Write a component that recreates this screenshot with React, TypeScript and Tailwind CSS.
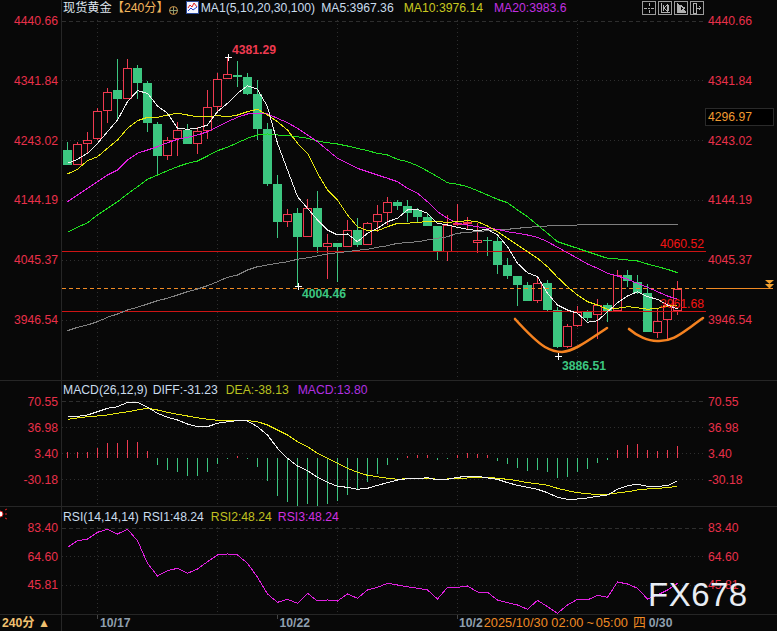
// 现货黄金 240分 K线图
type Candle = [kind: 'r' | 'g', high: number, top: number, bottom: number, low: number];

const candles: Candle[] = [
  ['g', 142, 150, 165, 165], ['r', 142, 144, 165, 165], ['r', 132, 140, 144, 153], ['r', 108, 111, 139, 140],
  ['r', 88, 92, 111, 123], ['g', 59, 90, 99, 120], ['r', 59, 68, 99, 99], ['g', 65, 68, 83, 99],
  ['g', 81, 83, 123, 132], ['g', 122, 124, 156, 175], ['r', 137, 140, 156, 160], ['r', 122, 130, 139, 156],
  ['g', 124, 130, 144, 144], ['r', 127, 131, 144, 154], ['r', 90, 107, 131, 139], ['r', 73, 79, 107, 111],
  ['r', 57, 74, 79, 79], ['g', 61, 75, 77, 87], ['g', 73, 77, 94, 95], ['g', 80, 94, 129, 140],
  ['g', 123, 129, 184, 186], ['g', 175, 184, 222, 238], ['r', 209, 214, 222, 227], ['g', 208, 213, 237, 287],
  ['r', 199, 208, 237, 237], ['g', 191, 208, 247, 253], ['r', 234, 243, 247, 279], ['g', 243, 243, 247, 282],
  ['r', 220, 230, 247, 247], ['g', 218, 230, 245, 247], ['r', 222, 223, 245, 245], ['r', 205, 214, 222, 232],
  ['r', 197, 202, 213, 225], ['g', 200, 202, 206, 210], ['g', 200, 206, 213, 222], ['g', 208, 210, 217, 223],
  ['g', 213, 217, 226, 226], ['g', 226, 226, 252, 260], ['r', 215, 225, 252, 261], ['r', 204, 223, 225, 226],
  ['r', 217, 222, 224, 230], ['r', 223, 240, 243, 253], ['g', 237, 240, 241, 256], ['g', 237, 241, 265, 274],
  ['g', 258, 265, 276, 279], ['g', 276, 276, 285, 306], ['g', 282, 285, 301, 301], ['r', 276, 283, 301, 303],
  ['g', 280, 283, 310, 312], ['g', 307, 310, 347, 348], ['r', 324, 326, 347, 348], ['r', 306, 312, 326, 327],
  ['g', 310, 312, 318, 321], ['r', 299, 305, 315, 339], ['g', 303, 305, 311, 322], ['r', 270, 275, 311, 312],
  ['g', 270, 275, 281, 287], ['g', 275, 282, 293, 294], ['g', 284, 293, 332, 332], ['r', 309, 321, 333, 338],
  ['r', 303, 305, 320, 341], ['r', 281, 289, 311, 315],
];

// 均线与指标都按截图 3 倍坐标读取
const ma5 = [490,478,460,430,395,360,305,272,280,318,340,385,388,385,375,335,310,280,257,268,320,430,510,590,625,660,690,705,702,725,700,685,665,655,630,628,640,670,675,682,688,692,688,705,740,790,818,830,880,915,930,940,967,962,935,908,888,875,890,898,915,927];
const ma10 = [522,508,482,470,445,420,385,362,352,352,345,340,345,350,350,347,350,345,335,328,345,365,390,430,460,520,570,600,645,680,692,692,680,670,670,667,665,665,667,665,662,665,678,695,715,735,755,775,800,832,860,885,905,915,928,925,920,923,928,925,918,915];
const ma20 = [605,585,565,545,525,510,480,460,450,440,428,418,412,405,395,380,365,352,342,340,342,355,368,385,405,425,450,475,490,505,515,525,535,545,565,580,605,635,655,670,675,680,685,688,695,700,705,712,725,742,758,775,792,805,820,828,838,850,862,875,888,898];
const ma30 = [697,682,668,645,625,605,582,560,538,525,512,500,490,483,468,452,442,428,415,405,402,405,407,410,415,423,428,432,438,445,452,460,465,478,485,497,513,530,548,553,560,572,585,598,608,630,650,675,700,725,735,745,755,765,775,777,780,783,792,800,808,818];
const ma100 = [992,982,975,965,952,942,930,922,912,902,895,885,875,867,857,845,832,825,810,800,795,790,785,778,773,768,762,758,755,751,748,742,737,730,728,725,720,715,710,700,697,695,692,690,688,685,682,680,678,677,676,675,674,674,674,673,673,673,673,673,673,673];
const diff = [109,109,105,95,85,80,67,67,82,100,112,120,132,140,140,130,125,122,123,140,165,205,235,258,272,292,307,319,322,328,325,316,308,300,296,296,293,300,298,292,289,289,294,298,308,316,322,328,338,352,358,357,354,349,345,328,317,313,319,319,317,302];
const dea = [118,114,110,108,105,100,95,90,85,90,97,103,108,113,118,121,122,122,122,125,135,150,165,185,200,220,235,250,265,277,286,290,295,298,296,295,295,298,297,295,294,292,292,295,298,302,308,311,316,325,332,338,341,344,343,339,335,330,327,325,323,318];
const hist = [217,217,217,205,188,190,180,187,213,255,270,275,288,288,275,252,237,228,238,260,303,348,365,377,372,378,373,362,345,328,305,282,255,240,227,225,225,240,236,225,220,222,225,243,252,263,272,270,275,293,290,275,267,249,240,210,195,192,210,213,210,198];
const rsi = [142,122,117,97,88,102,88,122,190,228,212,205,220,207,185,165,162,165,190,232,282,307,298,310,280,303,300,303,282,295,270,262,250,255,260,265,270,297,262,262,258,276,277,300,308,315,328,301,320,340,315,298,300,286,292,246,252,265,297,285,270,250];

const RED = '#ee3a50';
const GREEN = '#3cc680';
const BG = '#080808';
const gridX = [97, 217, 337, 457, 577];

const cx = (i: number) => 67.5 + i * 10;
const toPoints = (vals: number[], base: number) =>
  vals.map((v, i) => `${cx(i)},${(base + v / 3).toFixed(1)}`).join(' ');

function Grid({ rows, top, bottom }: { rows: number[]; top: number; bottom: number }) {
  return (
    <g shapeRendering="crispEdges" stroke="#2e2e2e" strokeWidth={1}>
      {gridX.map((x) => (
        <line key={x} x1={x + 0.5} x2={x + 0.5} y1={top} y2={bottom} strokeDasharray="1 3" />
      ))}
      {rows.map((y, i) => (
        <line key={y} x1={62} x2={706} y1={y + 0.5} y2={y + 0.5} strokeDasharray={i === 0 ? '4 3' : '1 3'} />
      ))}
    </g>
  );
}

function Line({ points, color }: { points: string; color: string }) {
  return <polyline points={points} fill="none" stroke={color} strokeWidth={1} shapeRendering="crispEdges" />;
}

function Plus({ x, y }: { x: number; y: number }) {
  return (
    <path d={`M${x - 3.5} ${y + 0.5}h7M${x} ${y - 3}v7`} stroke="#fff" strokeWidth={1} shapeRendering="crispEdges" />
  );
}

function PriceText({ x, y, fill, bold, children }: { x: number; y: number; fill: string; bold?: boolean; children: string }) {
  return (
    <text x={x} y={y} fill={fill} fontSize={12.2} fontWeight={bold ? 700 : 400} fontFamily="'Liberation Sans', sans-serif">
      {children}
    </text>
  );
}

function Axis({ labels, side, pad, gap }: { labels: string[]; side: 'left' | 'right'; pad: string; gap: string }) {
  return (
    <div className={`flex flex-col ${pad} ${gap} ${side === 'left' ? 'items-end pr-[3px]' : 'items-start pl-[2px]'}`}>
      {labels.map((t) => (
        <div key={t} className="h-[14px] leading-[14px] text-[12.2px] text-[#e8304a]">{t}</div>
      ))}
    </div>
  );
}

function ToolButton({ d, fill }: { d: string; fill?: string }) {
  return (
    <div className="w-[14px] h-[14px] border border-[#9c9c9c]">
      <svg width="12" height="12" viewBox="0 0 12 12">
        <path d={d} fill={fill ?? 'none'} stroke="#b0b0b0" strokeWidth={1} shapeRendering="crispEdges" />
      </svg>
    </div>
  );
}

function MainChart() {
  return (
    <svg width="644" height="360" viewBox="62 20 644 360" className="block">
      <Grid rows={[21, 80, 140, 200, 260, 320]} top={20} bottom={380} />
      <g shapeRendering="crispEdges">
        {candles.map(([kind, high, top, bottom, low], i) => {
          const x = cx(i);
          const color = kind === 'r' ? RED : GREEN;
          return (
            <g key={i}>
              <line x1={x} x2={x} y1={high} y2={low} stroke={color} strokeWidth={1} />
              {kind === 'r' ? (
                <rect x={x - 4} y={top + 0.5} width={8} height={Math.max(bottom - top - 1, 1)} fill={BG} stroke={color} strokeWidth={1} />
              ) : (
                <rect x={x - 4.5} y={top} width={9} height={Math.max(bottom - top, 1)} fill={color} />
              )}
            </g>
          );
        })}
      </g>
      <g shapeRendering="crispEdges" strokeWidth={1}>
        <line x1={62} x2={706} y1={251.5} y2={251.5} stroke="#cc1414" />
        <line x1={62} x2={706} y1={311.5} y2={311.5} stroke="#cc1414" />
        <line x1={62} x2={706} y1={288.5} y2={288.5} stroke="#f08a24" strokeDasharray="4 3" />
      </g>
      <Line points={toPoints(ma100, 0)} color="#808080" />
      <Line points={toPoints(ma30, 0)} color="#20e020" />
      <Line points={toPoints(ma20, 0)} color="#e020e0" />
      <Line points={toPoints(ma10, 0)} color="#e8e810" />
      <Line points={toPoints(ma5, 0)} color="#f0f0f0" />
      <path
        d="M515 319C525 330 535 341 545 347C552 351 557 352 562 352C575 351 590 339 607 328"
        fill="none" stroke="#f58220" strokeWidth={2.6} strokeLinecap="round"
      />
      <path
        d="M629 329C637 336 648 341 657 341C672 342 682 333 692 326C696 323 700 320 703 318"
        fill="none" stroke="#f58220" strokeWidth={2.6} strokeLinecap="round"
      />
      <Plus x={228} y={57} />
      <Plus x={298} y={286} />
      <Plus x={558} y={356} />
      <PriceText x={232} y={54} fill="#ee3a50" bold>4381.29</PriceText>
      <PriceText x={302} y={298} fill={GREEN} bold>4004.46</PriceText>
      <PriceText x={562} y={370} fill={GREEN} bold>3886.51</PriceText>
      <PriceText x={660} y={248} fill="#f51414">4060.52</PriceText>
      <PriceText x={660} y={308} fill="#f51414">3961.68</PriceText>
    </svg>
  );
}

function MacdChart() {
  return (
    <svg width="644" height="107" viewBox="62 399 644 107" className="block">
      <Grid rows={[401, 427, 453, 479]} top={399} bottom={506} />
      <g shapeRendering="crispEdges" strokeWidth={1}>
        {hist.map((v, i) => (
          <line
            key={i}
            x1={cx(i)}
            x2={cx(i)}
            y1={380 + 233 / 3}
            y2={380 + v / 3}
            stroke={v < 233 ? RED : GREEN}
          />
        ))}
      </g>
      <Line points={toPoints(dea, 380)} color="#e8e810" />
      <Line points={toPoints(diff, 380)} color="#f0f0f0" />
    </svg>
  );
}

function RsiChart() {
  return (
    <svg width="644" height="87" viewBox="62 527 644 87" className="block">
      <Grid rows={[528, 556, 585]} top={527} bottom={614} />
      <Line points={toPoints(rsi, 500)} color="#e020e0" />
    </svg>
  );
}

export default function App() {
  return (
    <div className="relative w-[777px] h-[631px] overflow-hidden bg-[#080808] flex flex-col text-xs [font-family:'Liberation_Sans','Noto_Sans_CJK_SC',sans-serif]">
      {/* K线主图 */}
      <div className="flex h-[381px] border-b border-[#262626]">
        <div className="w-[62px] border-r border-[#262626]">
          <Axis side="left" pad="pt-[14px]" gap="gap-[45.8px]" labels={['4440.66', '4341.84', '4243.02', '4144.19', '4045.37', '3946.54']} />
        </div>
        <div className="w-[644px]">
          <div className="h-[20px] flex items-start text-[12.2px] leading-[17px] pl-px">
            <span className="text-[#dfe6ee]">现货黄金</span>
            <span className="text-[#f0b45c]">【240分】</span>
            <svg width="11" height="11" viewBox="0 0 11 11" className="-ml-[1px] mt-[5px]">
              <circle cx="5.5" cy="5.5" r="4" fill="none" stroke="#d99a4c" />
              <path d="M1 5.5h9M5.5 2v7" stroke="#8a9a70" />
            </svg>
            <svg width="13" height="13" viewBox="0 0 13 13" className="ml-[7px] mt-[1px]">
              <rect x="0.5" y="0.5" width="12" height="12" fill="#f4f6ff" stroke="#2a4a9a" />
              <path d="M2 7l2-3 2 2 2-4 3 4" fill="none" stroke="#e02020" />
              <path d="M2 10l3-3 2 2 4-3" fill="none" stroke="#2040d0" />
            </svg>
            <span className="ml-[2px] text-[#c9dcec]">MA1(5,10,20,30,100)</span>
            <span className="ml-[6px] text-[#c9dcec]">MA5:3967.36</span>
            <span className="ml-[10px] text-[#c8c820]">MA10:3976.14</span>
            <span className="ml-[11px] text-[#c030e0]">MA20:3983.6</span>
            <div className="ml-auto mr-[2px] mt-px flex gap-[2px]">
              <ToolButton d="M1 6h3M8 6h3M6 1v3M6 8v3M5 6h2" />
              <ToolButton d="M2 1v9h9M4 3v6M9 3v6M5 6l3-3v6z" />
              <ToolButton d="M2 1v9h9M4 3v6M5 3l5 3-5 3z" fill="#b0b0b0" />
              <ToolButton d="M2 1v10h3V1zM5 6h5M8 4l2 2-2 2" />
            </div>
          </div>
          <MainChart />
        </div>
        <div className="relative flex-1">
          <Axis side="right" pad="pt-[14px]" gap="gap-[45.8px]" labels={['4440.66', '4341.84', '4243.02', '4144.19', '4045.37', '3946.54']} />
          <div className="absolute left-[-1px] top-[108px] w-[69px] h-[18px] border border-[#2a2a2a] bg-black pl-[2px] text-[12.2px] leading-[16px] text-[#f09a30]">4296.97</div>
          <div className="absolute left-0 top-[288px] w-[67px] h-px bg-[#f08a24]" />
          <svg width="9" height="9" viewBox="0 0 9 9" className="absolute left-[59px] top-[280px]">
            <path d="M0 0h9L4.5 4zM0 4h9L4.5 8.5z" fill="#f0a030" />
          </svg>
        </div>
      </div>

      {/* MACD */}
      <div className="flex h-[126px] border-b border-[#262626]">
        <div className="w-[62px] border-r border-[#262626]">
          <Axis side="left" pad="pt-[13.5px]" gap="gap-[12px]" labels={['70.55', '36.98', '3.40', '-30.18']} />
        </div>
        <div className="w-[644px]">
          <div className="h-[18px] flex items-center text-[12.2px] leading-[14px] pl-px">
            <span className="text-[#c9dcec]">MACD(26,12,9)</span>
            <span className="ml-[5px] text-[#c9dcec]">DIFF:-31.23</span>
            <span className="ml-[8px] text-[#b8c020]">DEA:-38.13</span>
            <span className="ml-[9px] text-[#b030e0]">MACD:13.80</span>
          </div>
          <MacdChart />
        </div>
        <Axis side="right" pad="pt-[13.5px]" gap="gap-[12px]" labels={['70.55', '36.98', '3.40', '-30.18']} />
      </div>

      {/* RSI */}
      <div className="flex h-[108px] border-b border-[#262626]">
        <div className="w-[62px] border-r border-[#262626]">
          <Axis side="left" pad="pt-[14px]" gap="gap-[14.5px]" labels={['83.40', '64.60', '45.81']} />
        </div>
        <div className="w-[644px]">
          <div className="h-[20px] flex items-center text-[12.2px] leading-[14px] pl-px">
            <span className="text-[#c9dcec]">RSI(14,14,14)</span>
            <span className="ml-[4px] text-[#c9dcec]">RSI1:48.24</span>
            <span className="ml-[7px] text-[#c0c020]">RSI2:48.24</span>
            <span className="ml-[6px] text-[#d030e0]">RSI3:48.24</span>
          </div>
          <RsiChart />
        </div>
        <Axis side="right" pad="pt-[14px]" gap="gap-[14.5px]" labels={['83.40', '64.60', '45.81']} />
      </div>

      {/* 时间轴 */}
      <div className="relative flex h-[16px] items-center leading-[16px] text-[12.2px]">
        <div className="w-[62px] border-r border-[#262626] h-full pl-[2px] font-bold text-[#f0c070]">
          240分 <span className="font-normal">▲</span>
        </div>
        <span className="ml-[38px] font-bold text-[#8f9fae]">10/17</span>
        <span className="ml-[149px] font-bold text-[#8f9fae]">10/22</span>
        <span className="ml-[149px] font-bold text-[#8f9fae]">10/2</span>
        <div className="ml-[1px] flex bg-[#080808] text-[12.8px] text-[#f08a24]">
          <span>2025/10/30 02:00</span>
          <span className="ml-[3px]">~</span>
          <span className="ml-[2px]">05:00</span>
          <span className="ml-[5px]">四</span>
        </div>
        <span className="ml-[3px] font-bold text-[#8f9fae]">0/30</span>
        <span className="absolute left-[97px] top-0 w-px h-[4px] bg-[#444]" />
        <span className="absolute left-[277px] top-0 w-px h-[4px] bg-[#444]" />
        <span className="absolute left-[457px] top-0 w-px h-[4px] bg-[#444]" />
      </div>

      {/* 角标与水印 */}
      <svg width="8" height="12" viewBox="0 0 8 12" className="absolute left-0 top-[508px]">
        <circle cx="0" cy="6" r="3" fill="#fff" stroke="#e02020" />
        <path d="M5 2l2-1M5 6h2M5 10l2 1" stroke="#e02020" />
      </svg>
      <div className="absolute left-[648px] top-[576px] text-[33px] leading-[38px] tracking-[0.5px] text-[#e8edf4]">FX678</div>
    </div>
  );
}
